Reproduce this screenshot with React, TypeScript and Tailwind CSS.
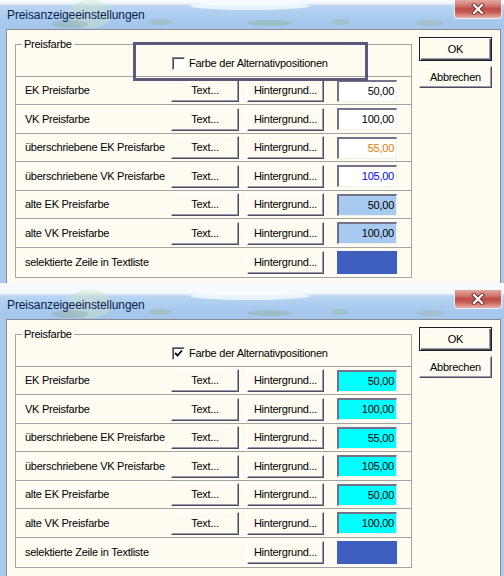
import React from 'react';

type Val = { v: string; box: string };

const btn =
  "flex items-center justify-center bg-[#fffbf0] border border-t-white border-l-white border-r-[#4e4e62] border-b-[#4e4e62] shadow-[inset_-1px_-1px_0_#9a9aaa] text-[11px] tracking-[-0.25px] text-black";

function Row({ label, h, val, noText }: { label: string; h: string; val?: Val; noText?: boolean }) {
  return (
    <div className={`flex items-center border-t border-[#a3a3a3] pl-[9px] ${h}`}>
      <div className="w-[146px] text-[11px] tracking-[-0.25px] text-black whitespace-nowrap">{label}</div>
      {noText ? (
        <div className="w-[68px]" />
      ) : (
        <div className={`${btn} w-[68px] h-[23px]`}>Text...</div>
      )}
      <div className={`${btn} ml-[8px] w-[77px] h-[23px]`}>Hintergrund...</div>
      {val ? (
        <div
          className={`ml-[13px] w-[60px] h-[22px] border-t-2 border-l-2 border-t-[#72728a] border-l-[#72728a] border-r border-b border-r-[#f2efe6] border-b-[#f2efe6] text-right pr-[2px] text-[11px] tracking-[-0.25px] leading-[18px] ${val.box}`}
        >
          {val.v}
        </div>
      ) : (
        <div className="ml-[13px] w-[60px] h-[23px] bg-[#3f5fbf]" />
      )}
    </div>
  );
}

function Dialog({ checked, vals, bodyH }: { checked: boolean; vals: Val[]; bodyH: string }) {
  return (
    <div className="relative w-[504px] h-[290px] shrink-0">
      <div className="relative h-[29px] flex justify-between bg-[linear-gradient(to_bottom,#f6f9fd_0px,#f6f9fd_3px,#b9d5f1_6px,#a8cbef_60%,#a4c6ea_100%)]">
        <svg className="absolute left-0 top-0" width="504" height="29" viewBox="0 0 504 29">
          <ellipse cx="90" cy="14" rx="22" ry="14" fill="#cfe3c8" opacity="0.45" />
          <ellipse cx="70" cy="24" rx="18" ry="4" fill="#8fae9c" opacity="0.45" />
          <ellipse cx="160" cy="22" rx="12" ry="3" fill="#9fb6a8" opacity="0.5" />
          <ellipse cx="270" cy="23" rx="22" ry="3" fill="#94b4a0" opacity="0.5" />
          <ellipse cx="340" cy="22" rx="10" ry="3" fill="#9fb6a8" opacity="0.45" />
          <ellipse cx="430" cy="23" rx="14" ry="3" fill="#a5b6b4" opacity="0.5" />
          <ellipse cx="250" cy="6" rx="60" ry="4" fill="#ffffff" opacity="0.7" />
        </svg>
        <div className="relative pl-[7px] pt-[8px] text-[12px] leading-[14px] tracking-[-0.1px] text-[#0c1b4d] font-['Liberation_Sans',Arial,sans-serif]">
          Preisanzeigeeinstellungen
        </div>
        <div className="relative mr-[2px] w-[48px] h-[19px] rounded-b-[4px] border border-t-0 border-[#eef0f4] bg-[linear-gradient(to_bottom,#e4a8a0_0%,#d27a72_30%,#bc4a44_50%,#c8625a_70%,#e8b0a6_100%)] flex items-center justify-center">
          <svg width="14" height="12" viewBox="0 0 14 12">
            <path d="M3 2 L11 10 M11 2 L3 10" stroke="#6a3432" strokeWidth="4" strokeLinecap="square" />
            <path d="M3 2 L11 10 M11 2 L3 10" stroke="#ffffff" strokeWidth="2.2" strokeLinecap="square" />
          </svg>
        </div>
      </div>
      <div className={`ml-[6px] w-[495px] ${bodyH} bg-[#fffbf0] border-l border-t border-r border-l-[#8a8a90] border-t-[#8a8a90] border-r-[#8a8a90] flex items-start font-['Liberation_Sans',Arial,sans-serif]`}>
        <fieldset className="ml-[8px] mt-[8px] w-[397px] border border-[#a3a3a3] p-0">
          <legend className="ml-[6px] px-[2px] text-[11px] leading-[13px] tracking-[-0.25px] text-black">Preisfarbe</legend>
          <div className="h-[25px] flex items-center pl-[156px]">
            <div className="relative w-[13px] h-[13px] bg-white border border-t-[#8a8a8a] border-l-[#8a8a8a] border-r-white border-b-white shadow-[inset_1px_1px_0_#4a4a4a]">
              {checked && (
                <svg className="absolute left-[1px] top-[1px]" width="9" height="9" viewBox="0 0 9 9">
                  <path d="M1 4 L3.5 6.5 L8 1.5" stroke="#000" strokeWidth="1.8" fill="none" />
                </svg>
              )}
            </div>
            <span className="ml-[4px] text-[11px] tracking-[-0.25px] text-black">Farbe der Alternativpositionen</span>
          </div>
          <Row label="EK Preisfarbe" h="h-[28px]" val={vals[0]} />
          <Row label="VK Preisfarbe" h="h-[29px]" val={vals[1]} />
          <Row label="überschriebene EK Preisfarbe" h="h-[28px]" val={vals[2]} />
          <Row label="überschriebene VK Preisfarbe" h="h-[29px]" val={vals[3]} />
          <Row label="alte EK Preisfarbe" h="h-[28px]" val={vals[4]} />
          <Row label="alte VK Preisfarbe" h="h-[29px]" val={vals[5]} />
          <Row label="selektierte Zeile in Textliste" h="h-[30px]" noText />
        </fieldset>
        <div className="ml-[7px] mt-[7px] flex flex-col">
          <div className="w-[73px] h-[24px] flex items-center justify-center bg-[#fffbf0] border border-[#1c1c24] shadow-[inset_1px_1px_0_#ffffff,inset_-1px_-1px_0_#4e4e62,inset_-2px_-2px_0_#9a9aaa] text-[11px] tracking-[-0.25px] text-black">
            OK
          </div>
          <div className={`${btn} mt-[5px] w-[73px] h-[22px]`}>Abbrechen</div>
        </div>
      </div>
      <div className="h-[7px] bg-[#f6f9fd]" />
      {!checked && (
        <div className="absolute left-[133px] top-[42px] w-[235px] h-[39px] border-[3px] border-[#5b5a7c]" />
      )}
    </div>
  );
}

export default function App() {
  const v1: Val[] = [
    { v: '50,00', box: 'bg-white text-black' },
    { v: '100,00', box: 'bg-white text-black' },
    { v: '55,00', box: 'bg-white text-[#e07b00]' },
    { v: '105,00', box: 'bg-white text-[#0000ff]' },
    { v: '50,00', box: 'bg-[#a6caf0] text-black' },
    { v: '100,00', box: 'bg-[#a6caf0] text-black' },
  ];
  const v2: Val[] = [
    { v: '50,00', box: 'bg-[#00ffff] text-black' },
    { v: '100,00', box: 'bg-[#00ffff] text-black' },
    { v: '55,00', box: 'bg-[#00ffff] text-black' },
    { v: '105,00', box: 'bg-[#00ffff] text-black' },
    { v: '50,00', box: 'bg-[#00ffff] text-black' },
    { v: '100,00', box: 'bg-[#00ffff] text-black' },
  ];
  return (
    <div className="w-[504px] h-[576px] overflow-hidden bg-[#a8cbef] flex flex-col">
      <Dialog checked={false} vals={v1} bodyH="h-[254px]" />
      <Dialog checked={true} vals={v2} bodyH="h-[260px]" />
    </div>
  );
}
